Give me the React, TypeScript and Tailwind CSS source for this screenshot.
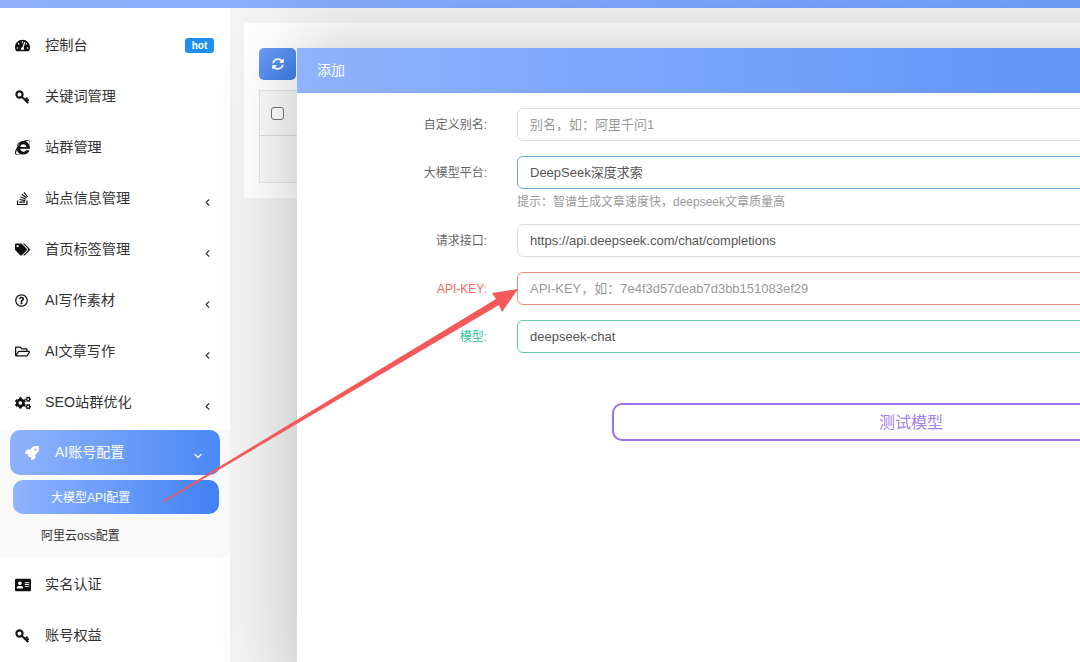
import React from 'react';
import {
  FaTachometerAlt, FaInternetExplorer, FaStackOverflow, FaTags, FaRegQuestionCircle,
  FaRegFolderOpen, FaCogs, FaRocket, FaAddressCard, FaSyncAlt,
} from 'react-icons/fa';
import { ChevronLeft, ChevronDown } from 'lucide-react';

const font = "font-['Liberation_Sans','Noto_Sans_CJK_SC',sans-serif]";

const KeyIcon = () => (
  <svg width="14" height="14" viewBox="0 0 14 14" fill="none" stroke="#111" strokeLinecap="square">
    <circle cx="4.5" cy="4.5" r="3.1" strokeWidth="2.1" />
    <path d="M7 7 L12.6 12.4 M10 10 L11.8 8.4 M11.6 11.6 L13 10.2" strokeWidth="1.9" />
  </svg>
);

const topItems = [
  { icon: <FaTachometerAlt size={15} />, label: '控制台', hot: true },
  { icon: <KeyIcon />, label: '关键词管理' },
  { icon: <FaInternetExplorer size={15} />, label: '站群管理' },
  { icon: <FaStackOverflow size={15} />, label: '站点信息管理', arrow: true },
  { icon: <FaTags size={15} />, label: '首页标签管理', arrow: true },
  { icon: <FaRegQuestionCircle size={13} />, label: 'AI写作素材', arrow: true },
  { icon: <FaRegFolderOpen size={15} />, label: 'AI文章写作', arrow: true },
  { icon: <FaCogs size={16} />, label: 'SEO站群优化', arrow: true },
];

const NavRow = ({ icon, label, hot, arrow }: { icon: React.ReactNode; label: string; hot?: boolean; arrow?: boolean }) => (
  <div className="h-[51px] flex items-center pl-[15px] text-[14.2px] text-[#333]">
    <span className="w-[30px] flex items-center text-[#111]">{icon}</span>
    <span>{label}</span>
    {hot && <span className="ml-auto mr-[16px] w-[29px] h-[15px] rounded-[3px] bg-[#1e8fef] text-white text-[10px] font-bold flex items-center justify-center">hot</span>}
    {arrow && <ChevronLeft size={11} strokeWidth={2.5} className="ml-auto mr-[17px] mt-[8px] text-[#333]" />}
  </div>
);

const Field = ({ label, value, placeholder, labelColor, borderColor }: { label: string; value?: string; placeholder?: string; labelColor: string; borderColor: string }) => (
  <div className="flex items-center h-[33px]">
    <label className={`w-[190px] text-right text-[12px] ${labelColor}`}>{label}:</label>
    <div className={`ml-[30px] flex-1 h-[33px] rounded-[6px] border ${borderColor} pl-[12px] flex items-center text-[13px] ${value ? 'text-[#555]' : 'text-[#999]'}`}>
      {value || placeholder}
    </div>
  </div>
);

export default function App() {
  return (
    <div className={`relative w-[1080px] h-[662px] overflow-hidden bg-[#f3f3f3] ${font}`}>
      <div className="h-2 bg-gradient-to-r from-[#8fb1fb] to-[#6f9ffb]" />
      <div className="flex h-[654px]">
        {/* sidebar */}
        <aside className="w-[230px] shrink-0 bg-white pt-[12px]">
          {topItems.map((item) => (
            <NavRow key={item.label} {...item} />
          ))}
          <div className="bg-[#f9f9f9] mt-[2px] h-[127px] mb-[2px]">
            <div className="mx-[10px] h-[45px] rounded-[10px] bg-gradient-to-r from-[#8fb3fc] to-[#4a88f5] flex items-center pl-[15px] text-white text-[14px]">
              <FaRocket size={14} className="mr-[16px]" />
              <span>AI账号配置</span>
              <ChevronDown size={12} strokeWidth={2.5} className="ml-auto mr-[16px] mt-[6px]" />
            </div>
            <div className="ml-[13px] mr-[11px] mt-[5px] h-[34px] rounded-[10px] bg-gradient-to-r from-[#8fb3fc] to-[#4081f5] flex items-center pl-[38px] pt-[1px] text-white text-[12px]">
              大模型API配置
            </div>
            <div className="pl-[41px] mt-[13px] text-[12px] text-[#333] leading-[18px]">阿里云oss配置</div>
          </div>
          <NavRow icon={<FaAddressCard size={16} />} label="实名认证" />
          <NavRow icon={<KeyIcon />} label="账号权益" />
        </aside>
        {/* page behind the dialog */}
        <main className="flex-1 pl-[14px] pt-[15px] min-w-0">
          <div className="h-[175px] bg-white pl-[15px] pt-[25px] rounded-[2px]">
            <div className="w-[37px] h-[32px] rounded-[5px] bg-gradient-to-br from-[#6d9df7] to-[#3f7de8] flex items-center justify-center text-white">
              <FaSyncAlt size={12} />
            </div>
            <div className="mt-[10px] border border-[#e6e6e6] bg-[#fafafa] h-[93px] flex flex-col">
              <div className="h-[45px] border-b border-[#ddd] flex items-center pl-[11px]">
                <span className="w-[13px] h-[13px] rounded-[3px] border border-[#777] bg-white" />
              </div>
            </div>
          </div>
        </main>
      </div>
      {/* dialog */}
      <div className="absolute left-[297px] top-[48px] w-[900px] h-[640px] bg-white shadow-[0_0_70px_rgba(0,0,0,0.24)]">
        <div className="h-[45px] bg-gradient-to-r from-[#8fb3fc] to-[#5a90f8] flex items-center pl-[20px] text-[14px] text-white">添加</div>
        <div className="pt-[15px] pr-[10px]">
          <Field label="自定义别名" placeholder="别名，如：阿里千问1" labelColor="text-[#666]" borderColor="border-[#ddd]" />
          <div className="mt-[15px]">
            <Field label="大模型平台" value="DeepSeek深度求索" labelColor="text-[#666]" borderColor="border-[#6aa8dc]" />
          </div>
          <div className="pl-[220px] mt-[5px] text-[12px] text-[#999] leading-[16px]">提示：智谱生成文章速度快，deepseek文章质量高</div>
          <div className="mt-[14px]">
            <Field label="请求接口" value="https://api.deepseek.com/chat/completions" labelColor="text-[#666]" borderColor="border-[#ddd]" />
          </div>
          <div className="mt-[15px]">
            <Field label="API-KEY" placeholder="API-KEY，如：7e4f3d57deab7d3bb151083ef29" labelColor="text-[#f0675c]" borderColor="border-[#ee8a80]" />
          </div>
          <div className="mt-[15px]">
            <Field label="模型" value="deepseek-chat" labelColor="text-[#2cc09c]" borderColor="border-[#62c9ae]" />
          </div>
          <div className="ml-[315px] mt-[50px] w-[598px] h-[38px] rounded-[10px] border-2 border-[#9b72ec] flex items-center justify-center pt-[1px] text-[16px] text-[#a57ff0]">
            测试模型
          </div>
        </div>
      </div>
      {/* annotation arrow */}
      <svg className="absolute left-0 top-0 pointer-events-none" width="1080" height="662" viewBox="0 0 1080 662">
        <polygon points="163,501 496,299 492,293 518,289 502,312 499,305 164,502" fill="#f55858" />
      </svg>
    </div>
  );
}
